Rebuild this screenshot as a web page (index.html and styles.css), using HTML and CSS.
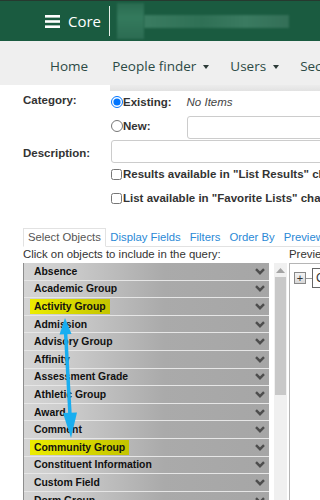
FILE: index.html
```html
<!DOCTYPE html>
<html>
  <head>
    <link rel="stylesheet" href="styles.css">
  </head>
  <body>
    <!-- top bar -->
    <header class="topbar">
      <div class="brand">
        <svg class="burger" width="15" height="13" viewBox="0 0 15 13">
          <rect x="0" y="0" width="15" height="2.6" fill="#fff"/>
          <rect x="0" y="5.2" width="15" height="2.6" fill="#fff"/>
          <rect x="0" y="10.4" width="15" height="2.6" fill="#fff"/>
        </svg>
        <span class="brand-name">Core</span>
      </div>
      <div class="brand-sep"></div>
      <div class="redacted">
        <span class="blk blk-tall"></span>
        <span class="blk blk-long"></span>
      </div>
    </header>

    <!-- main menu -->
    <nav class="menu">
      <a class="menu-item">Home</a>
      <a class="menu-item">People finder <span class="caret"></span></a>
      <a class="menu-item">Users <span class="caret"></span></a>
      <a class="menu-item">Security</a>
    </nav>
    <div class="menu-strip"></div>

    <main class="page">
      <div class="form-grid">
        <div class="field-label">Category:</div>
        <div class="field">
          <div class="radio-row">
            <input type="radio" name="cat" checked>
            <b class="opt">Existing:</b>
            <i class="no-items">No Items</i>
          </div>
          <div class="radio-row">
            <input type="radio" name="cat">
            <b class="opt">New:</b>
            <input type="text" class="text-input new-input">
          </div>
        </div>

        <div class="field-label desc-label">Description:</div>
        <div class="field">
          <input type="text" class="text-input desc-input">
          <div class="checks">
            <label class="check-row"><input type="checkbox">Results available in "List Results" channel</label>
            <label class="check-row"><input type="checkbox">List available in "Favorite Lists" channel</label>
          </div>
        </div>
      </div>

      <!-- query builder tabs -->
      <div class="tabs">
        <span class="tab tab-active">Select Objects</span>
        <a class="tab">Display Fields</a>
        <a class="tab">Filters</a>
        <a class="tab">Order By</a>
        <a class="tab">Preview</a>
      </div>

      <div class="query">
        <div class="query-left">
          <div class="hint">Click on objects to include in the query:</div>
          <div class="list-wrap">
            <div class="list">
              <div class="row"><span>Absence</span><svg class="chev" width="10" height="7" viewBox="0 0 10 7"><polyline points="1,1.2 5,5.2 9,1.2" fill="none" stroke="#4d4d4d" stroke-width="2.4"/></svg></div>
              <div class="row"><span>Academic Group</span><svg class="chev" width="10" height="7" viewBox="0 0 10 7"><polyline points="1,1.2 5,5.2 9,1.2" fill="none" stroke="#4d4d4d" stroke-width="2.4"/></svg></div>
              <div class="row"><span class="mark">Activity Group</span><svg class="chev" width="10" height="7" viewBox="0 0 10 7"><polyline points="1,1.2 5,5.2 9,1.2" fill="none" stroke="#4d4d4d" stroke-width="2.4"/></svg></div>
              <div class="row"><span>Admission</span><svg class="chev" width="10" height="7" viewBox="0 0 10 7"><polyline points="1,1.2 5,5.2 9,1.2" fill="none" stroke="#4d4d4d" stroke-width="2.4"/></svg></div>
              <div class="row"><span>Advisory Group</span><svg class="chev" width="10" height="7" viewBox="0 0 10 7"><polyline points="1,1.2 5,5.2 9,1.2" fill="none" stroke="#4d4d4d" stroke-width="2.4"/></svg></div>
              <div class="row"><span>Affinity</span><svg class="chev" width="10" height="7" viewBox="0 0 10 7"><polyline points="1,1.2 5,5.2 9,1.2" fill="none" stroke="#4d4d4d" stroke-width="2.4"/></svg></div>
              <div class="row"><span>Assessment Grade</span><svg class="chev" width="10" height="7" viewBox="0 0 10 7"><polyline points="1,1.2 5,5.2 9,1.2" fill="none" stroke="#4d4d4d" stroke-width="2.4"/></svg></div>
              <div class="row"><span>Athletic Group</span><svg class="chev" width="10" height="7" viewBox="0 0 10 7"><polyline points="1,1.2 5,5.2 9,1.2" fill="none" stroke="#4d4d4d" stroke-width="2.4"/></svg></div>
              <div class="row"><span>Award</span><svg class="chev" width="10" height="7" viewBox="0 0 10 7"><polyline points="1,1.2 5,5.2 9,1.2" fill="none" stroke="#4d4d4d" stroke-width="2.4"/></svg></div>
              <div class="row"><span>Comment</span><svg class="chev" width="10" height="7" viewBox="0 0 10 7"><polyline points="1,1.2 5,5.2 9,1.2" fill="none" stroke="#4d4d4d" stroke-width="2.4"/></svg></div>
              <div class="row"><span class="mark">Community Group</span><svg class="chev" width="10" height="7" viewBox="0 0 10 7"><polyline points="1,1.2 5,5.2 9,1.2" fill="none" stroke="#4d4d4d" stroke-width="2.4"/></svg></div>
              <div class="row"><span>Constituent Information</span><svg class="chev" width="10" height="7" viewBox="0 0 10 7"><polyline points="1,1.2 5,5.2 9,1.2" fill="none" stroke="#4d4d4d" stroke-width="2.4"/></svg></div>
              <div class="row"><span>Custom Field</span><svg class="chev" width="10" height="7" viewBox="0 0 10 7"><polyline points="1,1.2 5,5.2 9,1.2" fill="none" stroke="#4d4d4d" stroke-width="2.4"/></svg></div>
              <div class="row"><span>Dorm Group</span><svg class="chev" width="10" height="7" viewBox="0 0 10 7"><polyline points="1,1.2 5,5.2 9,1.2" fill="none" stroke="#4d4d4d" stroke-width="2.4"/></svg></div>

              <!-- blue drag arrow drawn over the list -->
              <svg class="drag-arrow" width="80" height="190">
                <line x1="41.5" y1="68" x2="46" y2="152" stroke="#19aef0" stroke-width="3.5"/>
                <polygon points="41,55 47.5,71 35.5,71.5" fill="#19aef0"/>
                <polygon points="47,175 53,149.5 39,150" fill="#19aef0"/>
              </svg>
            </div>
            <div class="scrollbar">
              <div class="scroll-btn"><svg width="9" height="5" viewBox="0 0 9 5"><polygon points="0,5 4.5,0 9,5" fill="#a3a3a3"/></svg></div>
              <div class="scroll-thumb"></div>
            </div>
          </div>
        </div>

        <div class="query-right">
          <div class="hint">Preview</div>
          <div class="preview-box">
            <div class="tree-node">
              <span class="expander">+</span>
              <span class="tree-line"></span>
              <span class="node-box">Constituent</span>
            </div>
          </div>
        </div>
      </div>
    </main>
  </body>
</html>
```

FILE: styles.css
```css
html, body {
  overflow: hidden;
}

body {
  margin: 0;
  width: 320px;
  height: 500px;
  background: #fff;
  font-family: "Liberation Sans", Arial, sans-serif;
  color: #333;
}

/* top bar */
.topbar {
  display: flex;
  align-items: center;
  height: 40px;
  background: #1a5b40;
  border-top: 1px solid #26392f;
  width: 600px;
}

.brand {
  display: flex;
  align-items: center;
  margin-left: 45px;
  gap: 8px;
}

.brand-name {
  font-family: "Open Sans", sans-serif;
  font-size: 15px;
  color: #fff;
}

.brand-sep {
  width: 1px;
  height: 30px;
  background: #e8efe9;
  margin-left: 8px;
}

.redacted {
  display: flex;
  align-items: center;
  margin-left: 7px;
  height: 40px;
}

.blk {
  display: block;
  filter: blur(1px);
}

.blk-tall {
  width: 27px;
  height: 36px;
  background: linear-gradient(to bottom, #2a6b50, #347a5d 40%, #2c6c52);
}

.blk-long {
  width: 145px;
  height: 13px;
  background: linear-gradient(to right, #3a7c61, #2f7055 40%, #3a7a60 70%, #336f57);
}

/* menu */
.menu {
  display: flex;
  align-items: center;
  height: 44px;
  padding-left: 50px;
  background: #efefef;
  width: 600px;
  box-sizing: border-box;
}

.menu-item {
  display: flex;
  align-items: center;
  font-family: "Open Sans", sans-serif;
  font-size: 13.5px;
  color: #2c4a45;
  margin-right: 21px;
  white-space: nowrap;
  padding-top: 5px;
}

.menu-item:first-child {
  margin-right: 24px;
}

.caret {
  display: inline-block;
  width: 0;
  height: 0;
  margin-left: 7px;
  margin-top: 2px;
  border-left: 3px solid transparent;
  border-right: 3px solid transparent;
  border-top: 4px solid #2c3a37;
}

.menu-strip {
  margin-left: 110px;
  height: 6px;
  width: 500px;
  background: linear-gradient(to bottom, #ececec, #e2e2e2);
}

/* form */
.page {
  padding-left: 23px;
  width: 700px;
}

.form-grid {
  display: grid;
  grid-template-columns: 88px 1fr;
  font-size: 11.5px;
}

.field-label {
  font-weight: bold;
  color: #333;
  padding-top: 3px;
}

.desc-label {
  padding-top: 8px;
}

.radio-row {
  display: flex;
  align-items: center;
  height: 22px;
}

.radio-row:nth-child(2) {
  height: 26px;
}

.radio-row input[type="radio"] {
  margin: 0;
  width: 12px;
  height: 12px;
}

.opt {
  color: #333;
  font-size: 11.5px;
}

.no-items {
  margin-left: 15px;
  font-size: 11.5px;
  color: #444;
}

.text-input {
  height: 23px;
  box-sizing: border-box;
  border: 1px solid #ccc;
  border-radius: 3px;
  background: #fff;
}

.new-input {
  margin-left: 37px;
  width: 300px;
  margin-top: 3px;
}

.desc-input {
  width: 380px;
  margin-top: 1px;
  display: block;
}

.checks {
  margin-top: -1px;
}

.check-row {
  display: flex;
  align-items: center;
  height: 24px;
  font-weight: bold;
  white-space: nowrap;
}

.check-row input {
  margin: 0 1px 0 0;
  width: 11px;
  height: 11px;
}

/* tabs */
.tabs {
  display: flex;
  align-items: flex-end;
  margin-top: 18px;
  height: 18px;
  border-bottom: 1px solid #e2e2e2;
  font-size: 11.3px;
}

.tab {
  padding: 0 4.5px;
  color: #2a89d6;
  line-height: 17px;
  white-space: nowrap;
}

.tab-active {
  color: #555;
  padding: 0 4px;
  border: 1px solid #e2e2e2;
  border-bottom-color: #fff;
  margin-bottom: -1px;
  background: #fff;
}

/* query area */
.query {
  display: flex;
}

.query-left {
  width: 265px;
}

.hint {
  font-size: 11.4px;
  color: #333;
  height: 16px;
  line-height: 15px;
  white-space: nowrap;
}

.list-wrap {
  display: flex;
  gap: 5px;
}

.list {
  position: relative;
  width: 245px;
  border-left: 1px solid #8e8e8e;
}

.row {
  display: flex;
  align-items: center;
  justify-content: space-between;
  height: 16.6px;
  border-bottom: 1px solid #e6e6e6;
  padding: 0 4px 0 10px;
  background: linear-gradient(to right, #d4d4d4 0, #cdcdcd 40px, #aaaaaa 140px, #a6a6a6 100%);
  font-size: 10.4px;
  font-weight: bold;
  color: #111;
  white-space: nowrap;
}

.mark {
  margin-left: -4px;
  padding: 2px 4px 2px 4px;
  background: linear-gradient(to right, #ecec00, #c4c400);
}

.chev {
  display: block;
}

.drag-arrow {
  position: absolute;
  left: 0;
  top: 0;
  pointer-events: none;
}

.scrollbar {
  width: 13px;
  background: #f0f0f0;
  display: flex;
  flex-direction: column;
}

.scroll-btn {
  height: 14px;
  display: flex;
  align-items: center;
  justify-content: center;
}

.scroll-thumb {
  height: 118px;
  background: #c8c8c8;
  margin: 0 1px;
}

.query-right {
  margin-left: 1px;
}

.preview-box {
  width: 200px;
  height: 260px;
  border: 1px solid #b5b5b5;
  padding: 4px;
}

.tree-node {
  display: flex;
  align-items: center;
}

.expander {
  display: flex;
  align-items: center;
  justify-content: center;
  width: 10px;
  height: 10px;
  border: 1px solid #888;
  background: linear-gradient(#f4f4f4, #d8d8d8);
  font-size: 11px;
  line-height: 10px;
  color: #333;
}

.tree-line {
  width: 6px;
  border-top: 1px solid #999;
}

.node-box {
  border: 1px solid #666;
  padding: 2px 3px;
  font-size: 12px;
}
```
